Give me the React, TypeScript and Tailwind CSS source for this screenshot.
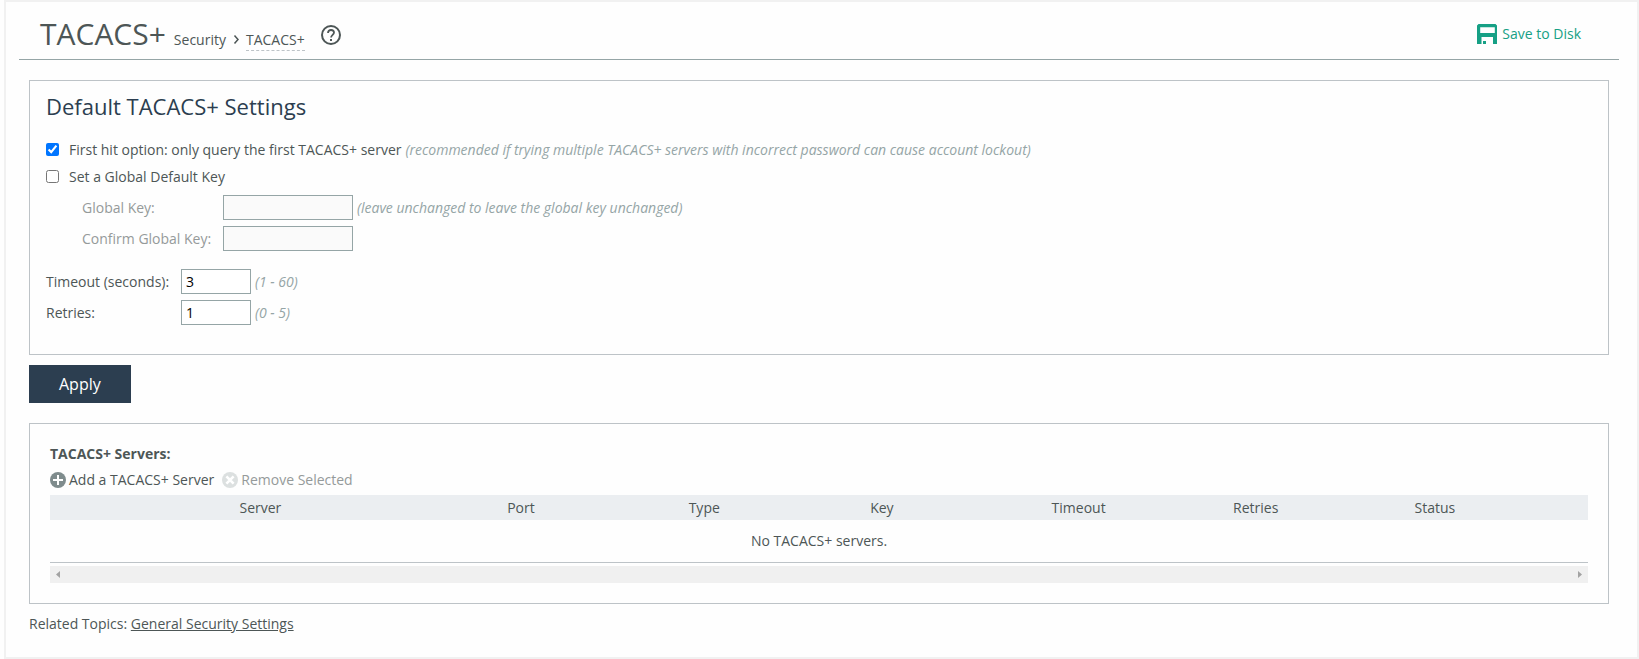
import React from "react";

const columns = ["Port", "Type", "Key", "Timeout", "Retries", "Status"];

const fieldClass = "h-[25px] border border-[#95a5a6] pl-1 text-[14px] text-black outline-none";
const hintClass = "ml-1 text-[#95a5a6] italic";

function SaveIcon() {
  return (
    <svg width="20" height="20" viewBox="0 0 20 20" fill="#16a085" aria-hidden="true">
      <path
        fillRule="evenodd"
        d="M1.5 0H18.5L20 1.5V20H16V13H4.5V20H0V1.5ZM3.2 3.2V9H17.8V3.2Z"
      />
      <path d="M6 17H9V20H6Z" />
    </svg>
  );
}

function HelpIcon() {
  return (
    <svg width="20" height="20" viewBox="0 0 20 20" fill="none" stroke="#4d5656" aria-hidden="true">
      <circle cx="10" cy="10" r="9" strokeWidth="2" />
      <path d="M7 7.9C7 6 8.3 5 10 5s3 1.1 3 2.6c0 2.2-2.9 2.4-2.9 4.9" strokeWidth="1.8" />
      <path d="M9 14h2v2H9z" fill="#4d5656" stroke="none" />
    </svg>
  );
}

function AddIcon() {
  return (
    <svg width="16" height="16" viewBox="0 0 16 16" aria-hidden="true">
      <circle cx="8" cy="8" r="8" fill="#7f8c8d" />
      <path d="M8 3v10M3 8h10" stroke="#fff" strokeWidth="2" />
    </svg>
  );
}

function RemoveIcon() {
  return (
    <svg width="16" height="16" viewBox="0 0 16 16" aria-hidden="true">
      <circle cx="8" cy="8" r="8" fill="#dce0e0" />
      <path d="M4.4 4.4l7.2 7.2M11.6 4.4l-7.2 7.2" stroke="#fff" strokeWidth="2.6" />
    </svg>
  );
}

export default function App() {
  return (
    <div className="bg-[#fefefe] pl-1 font-['Open_Sans',sans-serif] text-[14px] leading-5 text-[#4d5656]">
      <div className="border-2 border-[#f1f1f1] pr-[18px] pb-[23px] pl-[13px]">
        <header className="flex h-[58px] items-start justify-between border-b border-[#95a5a6] pr-[38px] pl-[21px]">
          <div className="flex items-baseline pt-3">
            <h1 className="text-[30px] leading-10">TACACS+</h1>
            <nav aria-label="Breadcrumb" className="ml-2 flex items-baseline">
              <a href="#security">Security</a>
              <svg className="mx-[7px]" width="6" height="10" viewBox="0 0 6 10" fill="none" stroke="#4d5656" strokeWidth="1.5" aria-hidden="true">
                <path d="M1.5 0.5L5 4.5L1.5 8.5" />
              </svg>
              <a href="#tacacs" className="border-b border-dashed border-[#bdc3c7]">
                TACACS+
              </a>
            </nav>
            <button type="button" aria-label="Help" className="ml-4 self-start pt-[11px]">
              <HelpIcon />
            </button>
          </div>
          <button type="button" className="mt-[22px] flex items-center gap-[5px] text-[#16a085]">
            <SaveIcon />
            Save to Disk
          </button>
        </header>

        <main className="px-[10px]">
          <form onSubmit={(e) => e.preventDefault()}>
            <section className="mt-5 border border-[#bdc3c7] px-4 pt-[11px] pb-[29px]">
              <h2 className="text-[22px] leading-7 text-[#2c3e50]">Default TACACS+ Settings</h2>
              <div className="mt-4 flex h-[27px] items-center">
                <input id="first-hit" type="checkbox" defaultChecked className="mr-[10px] size-[13px]" />
                <label htmlFor="first-hit">First hit option: only query the first TACACS+ server</label>
                <span className={hintClass}>
                  (recommended if trying multiple TACACS+ servers with incorrect password can cause account lockout)
                </span>
              </div>
              <div className="flex h-[27px] items-center">
                <input id="global-default" type="checkbox" className="mr-[10px] size-[13px]" />
                <label htmlFor="global-default">Set a Global Default Key</label>
              </div>
              <div className="mt-[5px] flex flex-col gap-[6px] pl-[36px] text-[#959a9a]">
                <div className="flex items-center">
                  <label htmlFor="global-key" className="w-[141px]">Global Key:</label>
                  <input id="global-key" type="password" disabled className={`${fieldClass} w-[130px] bg-[#fafafa]`} />
                  <span className={hintClass}>(leave unchanged to leave the global key unchanged)</span>
                </div>
                <div className="flex items-center">
                  <label htmlFor="confirm-key" className="w-[141px]">Confirm Global Key:</label>
                  <input id="confirm-key" type="password" disabled className={`${fieldClass} w-[130px] bg-[#fafafa]`} />
                </div>
              </div>
              <div className="mt-[18px] flex flex-col gap-[6px]">
                <div className="flex items-center">
                  <label htmlFor="timeout" className="w-[135px]">Timeout (seconds):</label>
                  <input id="timeout" type="text" defaultValue="3" className={`${fieldClass} w-[70px] bg-white`} />
                  <span className={hintClass}>(1 - 60)</span>
                </div>
                <div className="flex items-center">
                  <label htmlFor="retries" className="w-[135px]">Retries:</label>
                  <input id="retries" type="text" defaultValue="1" className={`${fieldClass} w-[70px] bg-white`} />
                  <span className={hintClass}>(0 - 5)</span>
                </div>
              </div>
            </section>
            <button type="submit" className="mt-[10px] block h-[38px] bg-[#2c3e50] px-[30px] text-[16px] text-white">
              Apply
            </button>
          </form>

          <section className="mt-5 border border-[#bdc3c7] p-5">
            <h3 className="font-bold">TACACS+ Servers:</h3>
            <div className="mt-[5px] flex h-[22px] items-center gap-2">
              <button type="button" className="flex items-center gap-[3px]">
                <AddIcon />
                Add a TACACS+ Server
              </button>
              <button type="button" disabled className="flex items-center gap-[3px] text-[#959a9a]">
                <RemoveIcon />
                Remove Selected
              </button>
            </div>
            <table className="mt-1 w-full table-fixed border-b border-[#bdc3c7]">
              <thead>
                <tr className="h-[25px] bg-[#ebeef1] text-left">
                  <td className="w-[11.8%]" />
                  <th scope="col" className="px-2 font-normal">Server</th>
                  {columns.map((name) => (
                    <th key={name} scope="col" className="w-[11.8%] px-2 font-normal">
                      {name}
                    </th>
                  ))}
                </tr>
              </thead>
              <tbody>
                <tr className="h-[42px]">
                  <td colSpan={8} className="text-center">No TACACS+ servers.</td>
                </tr>
              </tbody>
            </table>
            <div className="mt-[3px] flex h-[17px] items-center justify-between bg-[#f0f0f0] px-[6px]">
              <svg width="4" height="7" viewBox="0 0 4 7" fill="#a3a3a3" aria-hidden="true">
                <path d="M4 0V7L0 3.5Z" />
              </svg>
              <svg width="4" height="7" viewBox="0 0 4 7" fill="#a3a3a3" aria-hidden="true">
                <path d="M0 0V7L4 3.5Z" />
              </svg>
            </div>
          </section>

          <p className="mt-[10px]">
            Related Topics:{" "}
            <a href="#general-security" className="underline">General Security Settings</a>
          </p>
        </main>
      </div>
    </div>
  );
}
